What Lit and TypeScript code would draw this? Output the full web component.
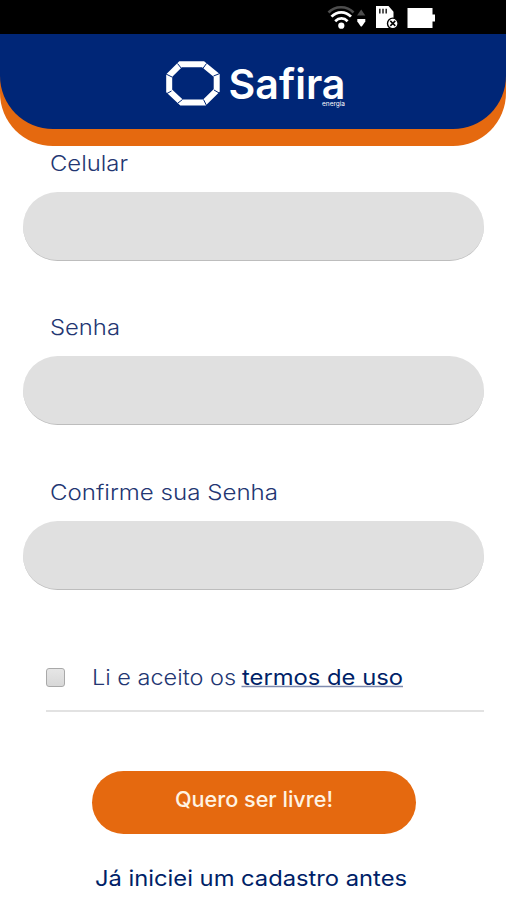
import { LitElement, html, css } from "lit";
import { customElement, property } from "lit/decorators.js";

@customElement("status-bar")
class StatusBar extends LitElement {
  static styles = css`
    :host { display: flex; justify-content: flex-end; height: 34px; background: #000; padding-right: 69px; }
    svg { display: block; }
  `;
  render() {
    return html`<svg width="110" height="34" viewBox="0 0 110 34" fill="none">
      <path d="M1.5 12.5 C8 5.5 20 5.5 26.5 12.5" stroke="#4d4d4d" stroke-width="2.6"/>
      <path d="M4.5 16.6 C10 10.9 18.5 10.9 24 16.6" stroke="#fff" stroke-width="2.8"/>
      <path d="M8.2 21.2 C12 17.5 17 17.5 20.6 21.2" stroke="#fff" stroke-width="2.7"/>
      <circle cx="14.3" cy="25.7" r="3.1" fill="#fff"/>
      <path d="M34.2 9.5 L38.3 15.5 H30Z" fill="#4d4d4d"/>
      <path d="M30.3 19 H38.3 V21.5 L34.8 26.5 H33.8 L30.3 21.5Z" fill="#fff"/>
      <path d="M49 6 H61.5 L66.5 11.8 V28 H49Z" fill="#fff"/>
      <path d="M52.8 8.7 V13.5 M56 8.7 V13.5 M59.2 8.7 V13.5" stroke="#222" stroke-width="1.5"/>
      <circle cx="65.8" cy="23.4" r="5.3" fill="#fff" stroke="#000" stroke-width="1.4"/>
      <path d="M63.3 20.9 L68.3 25.9 M68.3 20.9 L63.3 25.9" stroke="#000" stroke-width="1.5"/>
      <path d="M80.5 8 H105.5 V14.5 H108 V21.5 H105.5 V28 H80.5Z" fill="#fff"/>
    </svg>`;
  }
}

@customElement("brand-header")
class BrandHeader extends LitElement {
  static styles = css`
    :host { display: block; background: #e5690f; border-radius: 0 0 53px 53px; padding-bottom: 17px; }
    .panel { height: 95px; background: #002677; border-radius: 0 0 53px 53px; display: flex; justify-content: center; }
    svg { display: block; }
    .name { font: 600 41px Inter, "Open Sans", sans-serif; fill: #fff; }
    .sub { font: 400 6.5px Inter, "Open Sans", sans-serif; fill: #fff; }
  `;
  render() {
    return html`<div class="panel"><svg width="190" height="95" viewBox="0 0 190 95">
      <path d="M22.5 30.3 H45 L58.7 41.5 V56.5 L46.5 68.4 H23.5 L11.2 57 V41.5Z" stroke="#fff" stroke-width="6" fill="none"/>
      <path d="M19.5 29.5 L23.5 34.5 M48.5 29.5 L44.5 35 M61.8 39.5 L55.5 42 M62 59.5 L56 56 M48.5 71.5 L45.5 65.5 M20 69 L24.5 65.5 M8 60 L13.5 57 M8 40 L14 43" stroke="#002677" stroke-width="1"/>
      <text class="name" x="70.5" y="64.5" textLength="117" lengthAdjust="spacingAndGlyphs">Safira</text>
      <text class="sub" x="164" y="71.5" textLength="23" lengthAdjust="spacingAndGlyphs">energia</text>
    </svg></div>`;
  }
}

@customElement("form-field")
class FormField extends LitElement {
  @property() label = "";
  @property({ type: Number }) textWidth = 0;
  static styles = css`
    :host { display: block; height: 164.4px; }
    svg { display: block; margin-left: 27px; height: 46px; width: 300px; }
    text { font: 300 21.4px Inter, "Open Sans", sans-serif; fill: #233672; }
    .box { box-sizing: border-box; height: 69px; border-radius: 35px; background: #e0e0e0; border-bottom: 1px solid #bdbdbd; }
  `;
  render() {
    return html`<svg><text x="0" y="24.6" textLength=${this.textWidth} lengthAdjust="spacingAndGlyphs">${this.label}</text></svg>
      <div class="box"></div>`;
  }
}

@customElement("app-root")
class AppRoot extends LitElement {
  static styles = css`
    :host { display: block; height: 900px; overflow: hidden; background: #fff; }
    form { padding: 0 22px 0 23px; }
    .terms { display: flex; align-items: center; box-sizing: border-box; height: 73px; margin-left: 23px; padding-top: 5px; border-bottom: 2px solid #e2e2e2; }
    .check { box-sizing: border-box; width: 19px; height: 19px; border: 1.5px solid #a9a9a9; border-radius: 3px; background: linear-gradient(#e6e6e6, #d8d8d8); }
    svg { display: block; }
    .terms svg { margin-left: 26.5px; }
    text { font: 400 21.4px Inter, "Open Sans", sans-serif; fill: #001f68; }
    .light { font-weight: 300; fill: #233672; }
    .rule { stroke: #7f8bae; stroke-width: 1.5; }
    .cta { display: block; width: 324px; height: 63px; margin: 58.5px 0 0 69px; padding: 0; border: 0; border-radius: 32px; background: #e5690f; }
    .cta text { fill: #fff3e2; font-weight: 500; }
    .resume { margin: 20px 0 0 72px; }
  `;
  render() {
    return html`<status-bar></status-bar>
      <brand-header></brand-header>
      <form>
        <form-field label="Celular" .textWidth=${78}></form-field>
        <form-field label="Senha" .textWidth=${70}></form-field>
        <form-field label="Confirme sua Senha" .textWidth=${228}></form-field>
        <div class="terms">
          <div class="check"></div>
          <svg width="330" height="40">
            <text class="light" x="0" y="27.5" textLength="144" lengthAdjust="spacingAndGlyphs">Li e aceito os</text>
            <text x="150" y="27.5" textLength="161" lengthAdjust="spacingAndGlyphs">termos de uso</text>
            <path class="rule" d="M149.5 29.5 H311"/>
          </svg>
        </div>
        <button class="cta" type="button"><svg width="324" height="63">
          <text x="83" y="36" textLength="158" lengthAdjust="spacingAndGlyphs">Quero ser livre!</text>
        </svg></button>
        <svg class="resume" width="330" height="46">
          <text x="0" y="31.8" textLength="312" lengthAdjust="spacingAndGlyphs">Já iniciei um cadastro antes</text>
        </svg>
      </form>`;
  }
}
